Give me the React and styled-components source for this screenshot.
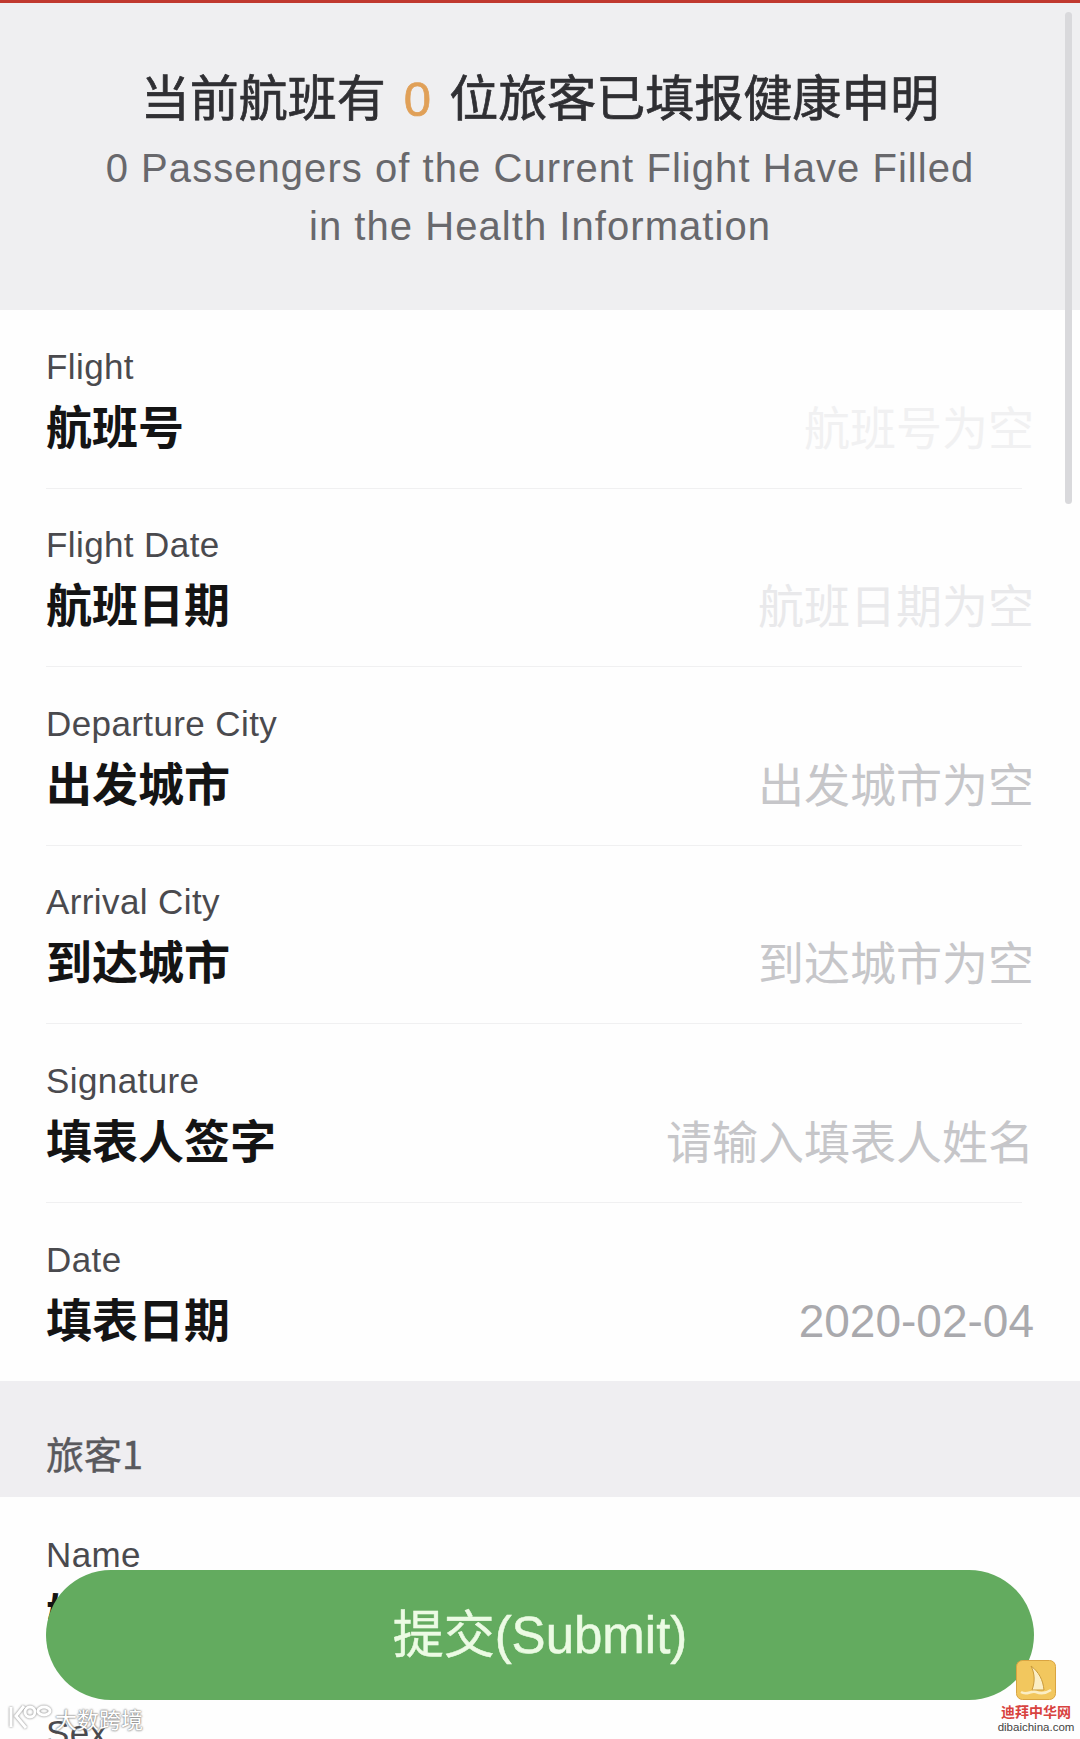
import React from "react";
import styled, { createGlobalStyle } from "styled-components";

const Global = createGlobalStyle`
  html, body { margin: 0; padding: 0; background: #fff; }
  body { font-family: "Liberation Sans", "Noto Sans CJK SC", sans-serif; }
`;
const Page = styled.div`
  position: relative;
  width: 1080px;
  height: 1739px;
  overflow: hidden;
  background: #fefefe;
`;
const TopBar = styled.div`
  height: 3px;
  background: #c0392f;
`;
const Header = styled.header`
  height: 307px;
  box-sizing: border-box;
  padding-top: 60px;
  background: #efeff1;
  text-align: center;
`;
const Title = styled.h1`
  margin: 0;
  font-size: 49px;
  line-height: 64px;
  font-weight: 400;
  -webkit-text-stroke: 0.7px #2f2f33;
  color: #2f2f33;
  font-family: "Noto Sans CJK SC", sans-serif;
`;
const Count = styled.span`
  margin: 0 18px;
  color: #e0a058;
  -webkit-text-stroke: 0.7px #e0a058;
  font-family: "Liberation Sans", sans-serif;
`;
const Subtitle = styled.p`
  margin: 8px 0 0;
  font-size: 40px;
  line-height: 58px;
  letter-spacing: 1.05px;
  color: #68686c;
  font-weight: 400;
`;
const Form = styled.section`
  display: flex;
  flex-direction: column;
`;
const Row = styled.div`
  height: 178.5px;
  box-sizing: border-box;
  margin: 0 58px 0 46px;
  display: flex;
  justify-content: space-between;
  align-items: flex-end;
  border-bottom: ${(p) => (p.$last ? "none" : "1.5px solid #f0f0f1")};
  padding-bottom: 32px;
`;
const Labels = styled.div`
  display: flex;
  flex-direction: column;
`;
const Label = styled.span`
  font-size: 35px;
  line-height: 40px;
  color: #4a4a4e;
  letter-spacing: 0.4px;
`;
const Value = styled.strong`
  margin-top: 5px;
  font-size: 46px;
  line-height: 64px;
  font-weight: 700;
  color: #141414;
  font-family: "Noto Sans CJK SC", sans-serif;
`;
const Placeholder = styled.span`
  margin-right: -12px;
  font-size: 46px;
  line-height: 62px;
  color: ${(p) => p.$c};
  font-family: "Noto Sans CJK SC", sans-serif;
  font-weight: 400;
`;
const DateValue = styled.span`
  margin-right: -12px;
  margin-bottom: -3px;
  font-size: 46px;
  line-height: 62px;
  color: #a9a9ad;
`;
const Section = styled.div`
  height: 116px;
  box-sizing: border-box;
  padding: 43px 0 0 46px;
  background: #efeef1;
  font-size: 38px;
  line-height: 58px;
  font-weight: 400;
  -webkit-text-stroke: 0.4px #59595d;
  color: #59595d;
  font-family: "Noto Sans CJK SC", sans-serif;
`;
const Submit = styled.button`
  position: absolute;
  left: 46px;
  top: 1570px;
  width: 988px;
  height: 130px;
  border: none;
  border-radius: 65px;
  background: #63ab5f;
  color: #ecfbe4;
  -webkit-text-stroke: 0.5px #ecfbe4;
  font-size: 51px;
  font-family: "Liberation Sans", "Noto Sans CJK SC", sans-serif;
  padding: 0 0 8px;
`;
const Scrollbar = styled.div`
  position: absolute;
  top: 12px;
  right: 8px;
  width: 7px;
  height: 492px;
  border-radius: 4px;
  background: #d9d9dc;
`;
const Mark = styled.div`
  position: absolute;
  left: 8px;
  top: 1702px;
  display: flex;
  align-items: center;
  gap: 3px;
  color: #fff;
  font-size: 22px;
  font-family: "Noto Sans CJK SC", sans-serif;
  text-shadow: 0 0 2px #777, 0 0 2px #777;
`;
const Brand = styled.div`
  position: absolute;
  left: 997px;
  top: 1660px;
  width: 78px;
  display: flex;
  flex-direction: column;
  align-items: center;
`;
const BrandCn = styled.span`
  margin-top: 3px;
  font-size: 14px;
  line-height: 17px;
  font-weight: 700;
  color: #d8433f;
  white-space: nowrap;
  font-family: "Noto Sans CJK SC", sans-serif;
`;
const BrandEn = styled.span`
  font-size: 11.5px;
  line-height: 14px;
  color: #444;
  white-space: nowrap;
`;

const rows = [
  ["Flight", "航班号", "航班号为空", "#f1f1f2"],
  ["Flight Date", "航班日期", "航班日期为空", "#e9e9eb"],
  ["Departure City", "出发城市", "出发城市为空", "#c6c6c9"],
  ["Arrival City", "到达城市", "到达城市为空", "#c6c6c9"],
  ["Signature", "填表人签字", "请输入填表人姓名", "#c6c6c9"],
];

export default function App() {
  return (
    <Page>
      <Global />
      <TopBar />
      <Header>
        <Title>当前航班有<Count>0</Count>位旅客已填报健康申明</Title>
        <Subtitle>
          0 Passengers of the Current Flight Have Filled
          <br />
          in the Health Information
        </Subtitle>
      </Header>
      <Form>
        {rows.map(([en, cn, ph, c]) => (
          <Row key={en}>
            <Labels>
              <Label>{en}</Label>
              <Value>{cn}</Value>
            </Labels>
            <Placeholder $c={c}>{ph}</Placeholder>
          </Row>
        ))}
        <Row $last>
          <Labels>
            <Label>Date</Label>
            <Value>填表日期</Value>
          </Labels>
          <DateValue>2020-02-04</DateValue>
        </Row>
        <Section>旅客1</Section>
        <Row $last>
          <Labels>
            <Label>Name</Label>
            <Value>姓名</Value>
          </Labels>
        </Row>
        <Row $last>
          <Labels>
            <Label>Sex</Label>
            <Value>性别</Value>
          </Labels>
        </Row>
      </Form>
      <Scrollbar />
      <Submit>提交(Submit)</Submit>
      <Mark>
        <svg width="44" height="30" viewBox="0 0 44 30" fill="none" stroke="#fff" strokeWidth="3" style={{ filter: "drop-shadow(0 0 1px #777)" }}>
          <path d="M3 4v20M16 3L8 13l10 12" />
          <circle cx="22" cy="9" r="5" />
          <ellipse cx="36" cy="8" rx="6" ry="4" />
        </svg>
        <span>大数跨境</span>
      </Mark>
      <Brand>
        <svg width="40" height="40" viewBox="0 0 40 40">
          <rect x="0.5" y="0.5" width="39" height="39" rx="6" fill="#f2c75e" stroke="#d9a441" />
          <path d="M15 6c8 6 12 14 13 24H16c3-8 3-16-1-24z" fill="#fbeec5" stroke="#c99a3a" />
          <path d="M5 32c6 4 10-2 15 0s9 2 15-2" fill="none" stroke="#fbeec5" strokeWidth="2.5" />
        </svg>
        <BrandCn>迪拜中华网</BrandCn>
        <BrandEn>dibaichina.com</BrandEn>
      </Brand>
    </Page>
  );
}
